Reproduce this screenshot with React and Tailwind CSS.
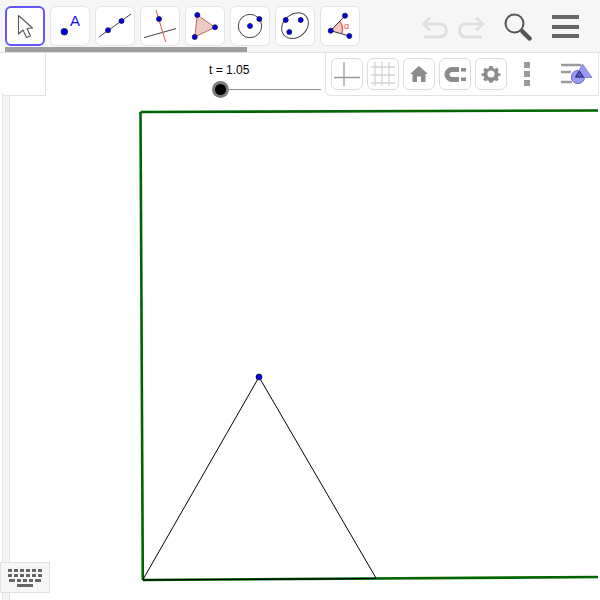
import React from 'react'

const Pt = ({ x, y, r = 2.5 }) => <circle cx={x} cy={y} r={r} fill="#0000f0" stroke="#14143c" strokeWidth="0.8" />

// toolbar icons, coordinates are relative to the 40x40 button
const TOOLS = [
  {
    id: 'move',
    icon: (
      <path d="M13.5 9.5 L13.5 28 L18 24 L21.5 31.5 L25.5 30 L22 22.5 L27.5 22 Z" fill="#fff" stroke="#555" strokeWidth="1.1" strokeLinejoin="round" />
    ),
  },
  {
    id: 'point',
    icon: (
      <>
        <circle cx="14.3" cy="25.7" r="3.3" fill="#0000f0" stroke="#14143c" strokeWidth="0.8" />
        <text x="20" y="19.5" fontSize="15" fill="#1010f0" fontFamily="'Liberation Sans', sans-serif">A</text>
      </>
    ),
  },
  {
    id: 'line',
    icon: (
      <>
        <line x1="4" y1="31" x2="36" y2="8" stroke="#444" strokeWidth="1" />
        <Pt x={13} y={24.2} />
        <Pt x={26.5} y={15} />
      </>
    ),
  },
  {
    id: 'perp',
    icon: (
      <>
        <line x1="4" y1="31.6" x2="36" y2="22.6" stroke="#444" strokeWidth="1" />
        <line x1="16" y1="4" x2="25.7" y2="36" stroke="#f05050" strokeWidth="1" />
        <Pt x={19} y={13} />
      </>
    ),
  },
  {
    id: 'polygon',
    icon: (
      <>
        <path d="M12.3 9 L30 21.3 L9.7 31 Z" fill="#eccbc4" stroke="#b86a58" strokeWidth="1" />
        <Pt x={12.3} y={9} />
        <Pt x={30} y={21.3} />
        <Pt x={9.7} y={31} />
      </>
    ),
  },
  {
    id: 'circle',
    icon: (
      <>
        <circle cx="20" cy="20" r="11.7" fill="none" stroke="#444" strokeWidth="1" />
        <Pt x={20} y={20} />
        <Pt x={29.3} y={13} />
      </>
    ),
  },
  {
    id: 'ellipse',
    icon: (
      <>
        <ellipse cx="20" cy="19.7" rx="14.5" ry="11.5" transform="rotate(-40 20 19.7)" fill="none" stroke="#444" strokeWidth="1" />
        <Pt x={10.7} y={14} />
        <Pt x={25.7} y={14} />
        <Pt x={14.3} y={26} />
      </>
    ),
  },
  {
    id: 'angle',
    icon: (
      <>
        <path d="M10.7 24.7 L20 15.5 A14 14 0 0 1 22 27.5 Z" fill="#f3c9c4" />
        <path d="M20 15.5 A14 14 0 0 1 22 27.5" fill="none" stroke="#f05050" strokeWidth="1.3" />
        <path d="M25 9.7 L10.7 24.7 L29.3 30" fill="none" stroke="#333" strokeWidth="1" />
        <Pt x={25} y={9.7} />
        <Pt x={10.7} y={24.7} />
        <Pt x={29.3} y={30} />
        <text x="24" y="22.5" fontSize="9" fill="#f05050" fontFamily="'Liberation Sans', sans-serif">α</text>
      </>
    ),
  },
]

function ToolButton({ active, children }) {
  return (
    <div
      className={`w-10 h-10 shrink-0 bg-white rounded-[6px] ${
        active ? 'border-2 border-[#6557ff]' : 'border border-[#e4e4e4]'
      }`}
    >
      {active ? (
        <svg viewBox="2 2 36 36" className="w-9 h-9">{children}</svg>
      ) : (
        <svg viewBox="1 1 38 38" className="w-[38px] h-[38px]">{children}</svg>
      )}
    </div>
  )
}

function StyleButton({ children }) {
  return (
    <div className="w-8 h-8 shrink-0 bg-white rounded-[6px] border border-[#dcdcdc]">
      <svg viewBox="0 0 30 30" className="w-[30px] h-[30px]">{children}</svg>
    </div>
  )
}

function Toolbar() {
  return (
    <div className="relative h-[53px] bg-[#f6f6f6] border-b border-[#e2e2e2] shrink-0">
      <div className="flex items-start gap-[5px] pl-[5px] pt-[6px]">
        {TOOLS.map((t, i) => (
          <ToolButton key={t.id} active={i === 0}>{t.icon}</ToolButton>
        ))}
        <div className="flex items-start ml-[56px] mt-[7px]">
          <svg width="28" height="23" viewBox="0 0 28 23" fill="none" stroke="#dfdfdf" strokeWidth="3" className="mt-[3px]">
            <path d="M3 8 H19 A6.5 6.5 0 0 1 19 21 H3" />
            <path d="M9 1.5 L2.5 8 L9 14.5" />
          </svg>
          <svg width="28" height="23" viewBox="0 0 28 23" fill="none" stroke="#dfdfdf" strokeWidth="3" className="ml-[8px] mt-[3px]">
            <path d="M25 8 H9 A6.5 6.5 0 0 0 9 21 H25" />
            <path d="M19 1.5 L25.5 8 L19 14.5" />
          </svg>
          <svg width="28" height="28" viewBox="0 0 28 28" fill="none" className="ml-[19px]">
            <circle cx="10.5" cy="10.5" r="9" stroke="#555" strokeWidth="2" />
            <line x1="18.5" y1="18.5" x2="25.5" y2="25.5" stroke="#555" strokeWidth="4.5" strokeLinecap="round" />
          </svg>
          <div className="flex flex-col gap-[5.5px] ml-[20px] mt-[2px]">
            <div className="w-[27px] h-[4px] bg-[#666]" />
            <div className="w-[27px] h-[4px] bg-[#666]" />
            <div className="w-[27px] h-[4px] bg-[#666]" />
          </div>
        </div>
      </div>
      <div className="absolute left-[5px] top-[47px] w-[242px] h-[5px] bg-[#9e9e9e]" />
    </div>
  )
}

function StyleBar() {
  return (
    <div className="absolute right-[1px] top-0 w-[274px] h-[43px] bg-white border-l border-b border-r border-[#e2e2e2] rounded-bl-[6px] flex items-center pl-[5px] gap-1">
      <StyleButton>
        <path d="M12 3 V27 M2 18.5 H28" stroke="#9a9a9a" strokeWidth="1.3" />
      </StyleButton>
      <StyleButton>
        <path d="M7 3 V27 M14 3 V27 M21 3 V27 M3 8 H27 M3 16 H27 M3 24 H27" stroke="#d4d4d4" strokeWidth="1.3" />
      </StyleButton>
      <StyleButton>
        <path d="M15 7 L24 15 H21.5 V23 H17 V17.5 H13 V23 H8.5 V15 H6 Z" fill="#8c8c8c" />
      </StyleButton>
      <StyleButton>
        <path d="M19 10.5 H12 A5 5 0 0 0 12 20.5 H19" fill="none" stroke="#8c8c8c" strokeWidth="5" />
        <path d="M21 9 H26 V12.5 H21 Z M21 18.5 H26 V22 H21 Z" fill="#8c8c8c" />
      </StyleButton>
      <StyleButton>
        <path d="M13 6 H17 L17.6 8.6 L19.8 9.6 L22.2 8.2 L24.8 10.8 L23.4 13.2 L24.4 15 L27 15.6 V18 L24.4 18.6 L23.4 20.6 L24.8 23 L22.2 25 L19.8 23.8 L17.6 24.6 L17 27 H13 L12.4 24.6 L10.2 23.8 L7.8 25 L5.2 23 L6.6 20.6 L5.6 18.6 L3 18 V15.6 L5.6 15 L6.6 13.2 L5.2 10.8 L7.8 8.2 L10.2 9.6 L12.4 8.6 Z" transform="translate(3 2.2) scale(0.8)" fill="#8c8c8c" />
        <circle cx="15" cy="15" r="3.6" fill="#fff" />
      </StyleButton>
      <div className="flex flex-col gap-[3px] ml-[13px]">
        <div className="w-[6px] h-[6px] bg-[#9a9a9a]" />
        <div className="w-[6px] h-[6px] bg-[#9a9a9a]" />
        <div className="w-[6px] h-[6px] bg-[#9a9a9a]" />
      </div>
      <svg width="32" height="22" viewBox="0 0 32 22" className="ml-[27px]">
        <path d="M0 2 H20 M0 9 H10 M0 19 H11" stroke="#9a9a9a" strokeWidth="2.6" />
        <circle cx="17" cy="14" r="6.6" fill="#9a9af5" stroke="#6a6ad0" strokeWidth="1" />
        <path d="M21.5 1 L31 14.5 H14 Z" fill="#9a9af5" stroke="#7a7ac0" strokeWidth="0.8" />
        <path d="M18.5 8 L22.5 14 H14.5 Z" fill="#5a5ac8" stroke="#22226a" strokeWidth="1" />
      </svg>
    </div>
  )
}

function Keyboard() {
  const row = 'flex gap-[2px] justify-center'
  const key = 'w-[4px] h-[3px] bg-[#666]'
  return (
    <div className="absolute left-0 bottom-[7px] w-[50px] h-[31px] bg-[#f6f6f6] border border-[#e0e0e0] flex flex-col gap-[2px] items-center justify-center">
      <div className={row}>
        {[0, 1, 2, 3, 4, 5].map(i => <div key={i} className={key} />)}
      </div>
      <div className={row}>
        {[0, 1, 2, 3, 4, 5].map(i => <div key={i} className={key} />)}
      </div>
      <div className={row}>
        <div className="w-[6px] h-[3px] bg-[#666]" />
        {[0, 1, 2].map(i => <div key={i} className={key} />)}
        <div className="w-[6px] h-[3px] bg-[#666]" />
      </div>
      <div className="w-[16px] h-[3px] bg-[#666]" />
    </div>
  )
}

export default function App() {
  return (
    <div className="relative w-[600px] h-[600px] overflow-hidden bg-white flex flex-col font-['Liberation_Sans',sans-serif]">
      <Toolbar />
      <div className="relative flex-1">
        {/* drawing pad */}
        <svg className="absolute left-0 top-[-53px]" width="600" height="600" viewBox="0 0 600 600">
          <path d="M140.5 112 L598 110.5" stroke="#006400" strokeWidth="2.6" fill="none" />
          <path d="M140.5 112 L142.8 580" stroke="#006400" strokeWidth="2.6" fill="none" />
          <path d="M142.8 580 L598 577" stroke="#006400" strokeWidth="2.6" fill="none" />
          <path d="M143 579.5 L259 377 L376 578" stroke="#000" strokeWidth="1" fill="none" />
          <path d="M143 580 L376 578.5" stroke="#000" strokeWidth="1.2" fill="none" />
          <circle cx="259" cy="377" r="3" fill="#0000f0" stroke="#14143c" strokeWidth="0.8" />
        </svg>

        <div className="absolute left-[2px] top-[42px] bottom-0 w-[8px] bg-[#f4f4f4] border-x border-[#e6e6e6]" />
        <div className="absolute left-0 top-0 w-[46px] h-[43px] bg-white border-r border-b border-[#e2e2e2] rounded-bl-[6px]" />

        {/* slider t */}
        <span className="absolute left-[209px] top-[10px] text-[12px] leading-[14px] text-black">t = 1.05</span>
        <div className="absolute left-[212px] top-[28px] flex items-center">
          <div className="w-[17px] h-[17px] rounded-full bg-[#7c7c7c] flex items-center justify-center">
            <div className="w-[11px] h-[11px] rounded-full bg-black" />
          </div>
          <div className="w-[92px] h-px bg-[#8c8c8c]" />
        </div>

        <StyleBar />
        <Keyboard />
      </div>
    </div>
  )
}
